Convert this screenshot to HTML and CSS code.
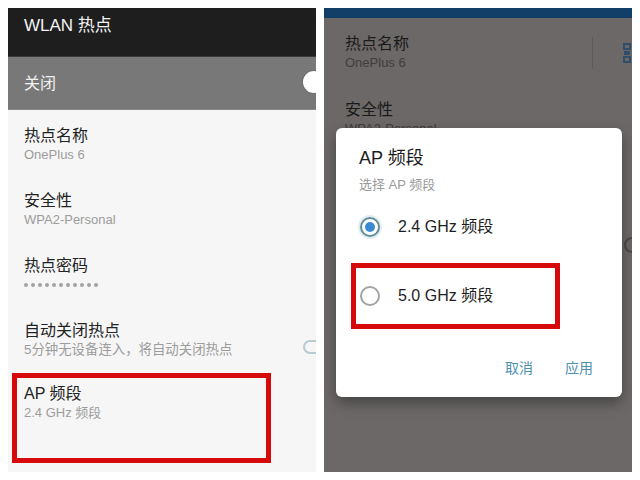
FILE: index.html
```html
<!DOCTYPE html>
<html lang="zh-CN">
<head>
<meta charset="utf-8">
<title>WLAN 热点</title>
<link rel="stylesheet" href="styles.css">
</head>
<body>
<div class="screens">
  <section class="panel panel-left">
    <header class="appbar">WLAN 热点</header>
    <div class="master">
      <span>关闭</span>
      <span class="knob"></span>
    </div>
    <ul class="list">
      <li class="item">
        <div class="title">热点名称</div>
        <div class="sub">OnePlus 6</div>
      </li>
      <li class="item">
        <div class="title">安全性</div>
        <div class="sub">WPA2-Personal</div>
      </li>
      <li class="item">
        <div class="title">热点密码</div>
        <div class="dots"><i></i><i></i><i></i><i></i><i></i><i></i><i></i><i></i><i></i><i></i><i></i></div>
      </li>
      <li class="item item-switch">
        <div>
          <div class="title">自动关闭热点</div>
          <div class="sub">5分钟无设备连入，将自动关闭热点</div>
        </div>
        <span class="switch"></span>
      </li>
      <li class="item item-marked">
        <div class="title">AP 频段</div>
        <div class="sub">2.4 GHz 频段</div>
      </li>
    </ul>
  </section>

  <section class="panel panel-right">
    <div class="statusbar"></div>
    <div class="dim">
      <div class="dim-item dim-first">
        <div class="dim-text">
          <div class="dim-title">热点名称</div>
          <div class="dim-sub">OnePlus 6</div>
        </div>
        <span class="divider"></span>
        <svg class="qr" width="8" height="20" viewBox="0 0 8 20"><rect x="1" y="1" width="6" height="5" fill="none" stroke="#2f4e6c" stroke-width="2"/><rect x="1" y="8" width="6" height="4" fill="#2f4e6c"/><rect x="1" y="14" width="6" height="5" fill="none" stroke="#2f4e6c" stroke-width="2"/></svg>
      </div>
      <div class="dim-item">
        <div class="dim-text">
          <div class="dim-title">安全性</div>
          <div class="dim-sub">WPA2-Personal</div>
        </div>
      </div>
      <span class="edge-radio"></span>
    </div>

    <div class="dialog">
      <div class="d-title">AP 频段</div>
      <div class="d-sub">选择 AP 频段</div>
      <div class="option">
        <span class="radio radio-on"></span>
        <span class="opt-label">2.4 GHz 频段</span>
      </div>
      <div class="option option-marked">
        <span class="radio"></span>
        <span class="opt-label">5.0 GHz 频段</span>
      </div>
      <div class="actions">
        <span class="btn">取消</span>
        <span class="btn">应用</span>
      </div>
    </div>
  </section>
</div>
</body>
</html>
```

FILE: styles.css
```css
* { box-sizing: border-box; }

html, body {
  margin: 0;
  padding: 0;
  background: #ffffff;
}

body {
  font-family: "Liberation Sans", "Noto Sans CJK SC", sans-serif;
  width: 640px;
  height: 480px;
  overflow: hidden;
}

.screens {
  display: flex;
  gap: 8px;
  padding: 8px 8px 0 8px;
}

.panel {
  width: 308px;
  height: 464px;
  overflow: hidden;
  position: relative;
}

/* ---------- left ---------- */
.panel-left {
  background: #f6f6f6;
  display: flex;
  flex-direction: column;
}

.appbar {
  height: 49px;
  background: #1e1e1e;
  color: #f4f4f4;
  font-size: 17px;
  line-height: 20px;
  padding: 8px 0 0 16px;
  border-bottom: 1px solid #3a3a3a;
}

.master {
  height: 53px;
  background: #787878;
  color: #f2f2f2;
  font-size: 16px;
  display: flex;
  align-items: center;
  justify-content: space-between;
  padding-left: 16px;
  padding-bottom: 2px;
  border-bottom: 1px solid #8a8a8a;
}

.knob {
  width: 22px;
  height: 22px;
  border-radius: 50%;
  background: #ffffff;
  margin-right: -9px;
  box-shadow: 0 0 2px rgba(0,0,0,0.25);
}

.list {
  list-style: none;
  margin: 0;
  padding: 0;
  display: flex;
  flex-direction: column;
}

.item {
  height: 65px;
  padding: 16px 0 0 16px;
}

.title {
  font-size: 16px;
  line-height: 20px;
  color: #222222;
}

.sub {
  font-size: 13px;
  line-height: 18px;
  color: #9c9c9c;
}

.item-switch .sub {
  font-size: 13.4px;
}

.dots {
  display: flex;
  gap: 3px;
  padding-top: 7px;
}

.dots i {
  width: 4px;
  height: 4px;
  border-radius: 50%;
  background: #a2a2a2;
}

.item-switch {
  display: flex;
  justify-content: space-between;
  align-items: flex-start;
}

.switch {
  width: 26px;
  height: 14px;
  border: 2px solid #b7cbd0;
  border-radius: 7px;
  margin-top: 19px;
  margin-right: -13px;
}

.item-marked {
  margin: 3px 0 0 4px;
  width: 259px;
  height: 90px;
  border: 5px solid #d60a0a;
  padding: 6px 0 0 7px;
}

/* ---------- right ---------- */
.panel-right {
  background: #6b6867;
}

.statusbar {
  height: 10px;
  background: #123f68;
}

.dim {
  position: relative;
  padding: 16px 0 0 21px;
  height: 454px;
}

.dim-item {
  display: flex;
  align-items: flex-start;
  height: 66px;
}

.dim-text { flex: 1; }

.dim-title {
  font-size: 16px;
  line-height: 20px;
  color: #1a1a1a;
}

.dim-sub {
  font-size: 13px;
  line-height: 18px;
  color: #403d3c;
}

.divider {
  width: 1px;
  height: 32px;
  margin-top: 3px;
  background: #5d5a59;
  margin-right: 30px;
}

.qr {
  margin-top: 9px;
  margin-right: 1px;
}

.edge-radio {
  position: absolute;
  right: -8px;
  top: 219px;
  width: 16px;
  height: 16px;
  border: 2px solid #4d4a49;
  border-radius: 50%;
}

.dialog {
  position: absolute;
  left: 12px;
  top: 120px;
  width: 286px;
  height: 269px;
  background: #ffffff;
  border-radius: 6px;
  box-shadow: 0 6px 14px rgba(0,0,0,0.35);
  padding: 20px 0 0 15px;
  display: flex;
  flex-direction: column;
}

.d-title {
  font-size: 18px;
  line-height: 20px;
  color: #1c1c1c;
  padding-left: 8px;
}

.d-sub {
  font-size: 13px;
  line-height: 18px;
  color: #9a9a9a;
  margin-top: 8px;
  padding-left: 8px;
}

.option {
  height: 40px;
  display: flex;
  align-items: center;
  padding-left: 9px;
  margin-top: 13px;
}

.option-marked {
  width: 209px;
  height: 66px;
  border: 5px solid #d60a0a;
  padding-left: 4px;
  margin-top: 16px;
}

.radio {
  width: 20px;
  height: 20px;
  border-radius: 50%;
  border: 2px solid #a3a3a3;
  flex: none;
  display: flex;
  align-items: center;
  justify-content: center;
}

.radio-on {
  border-color: #5f8e9b;
  box-shadow: 0 0 0 2px #e4eef1;
}

.radio-on::after {
  content: "";
  width: 10px;
  height: 10px;
  border-radius: 50%;
  background: #3b8ad4;
}

.opt-label {
  margin-left: 18px;
  font-size: 16px;
  line-height: 20px;
  color: #1e1e1e;
}

.actions {
  display: flex;
  justify-content: flex-end;
  gap: 32px;
  padding-right: 29px;
  margin-top: 29px;
}

.btn {
  font-size: 14px;
  line-height: 20px;
  color: #4c8fb0;
}
```
